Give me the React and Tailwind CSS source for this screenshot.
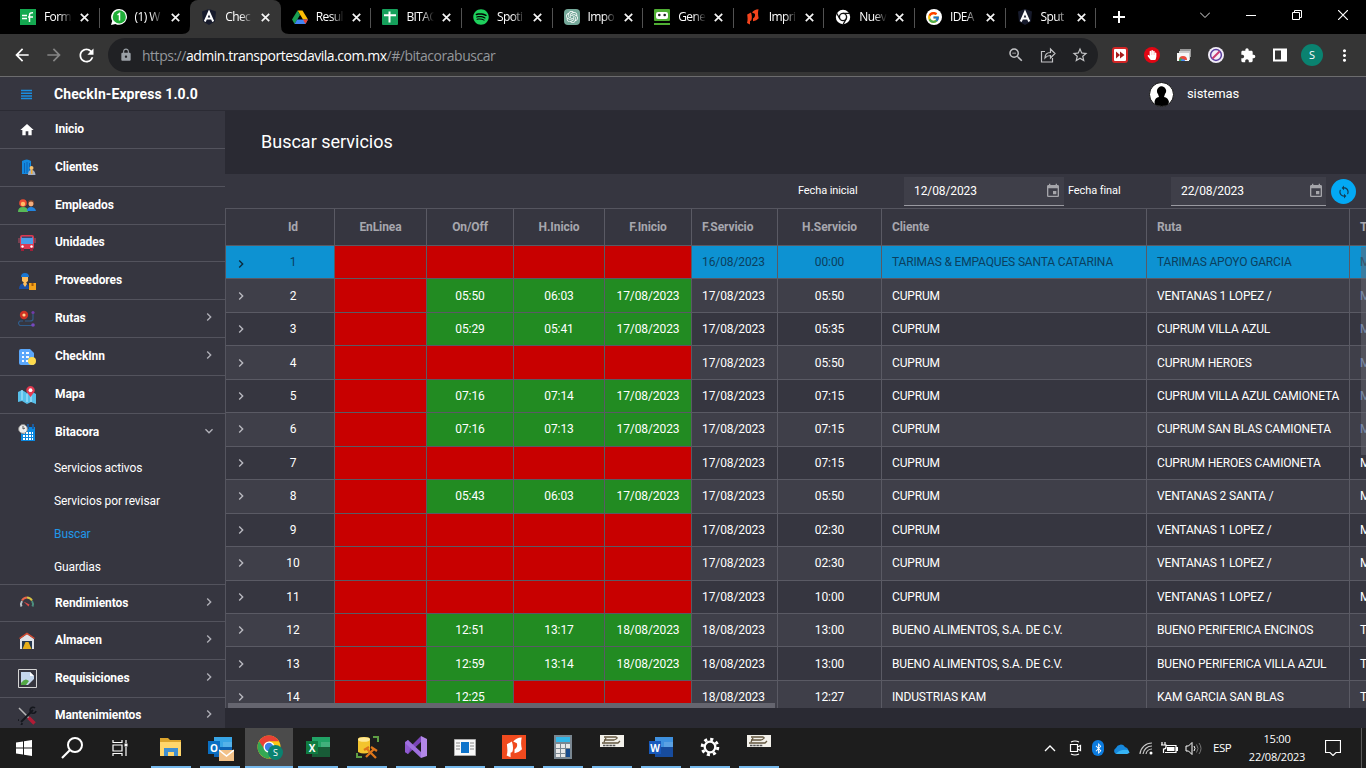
import React from "react";
import { MdHome, MdSync, MdEvent, MdStarBorder, MdLock, MdExtension, MdArrowBack, MdArrowForward, MdRefresh, MdMoreVert, MdChevronRight, MdOutlineZoomOut } from "react-icons/md";
import { FaSpotify, FaHandPaper, FaBluetoothB } from "react-icons/fa";
import { FcGoogle } from "react-icons/fc";
import { SiOpenai } from "react-icons/si";

const S = ({ s = 16, b = 16, children, className = "" }) => (
  <svg width={s} height={s} viewBox={`0 0 ${b} ${b}`} fill="none" className={`shrink-0 ${className}`}>{children}</svg>
);

const Angular = () => (
  <S><path d="M8 0l7 2.500-1 10L8 16l-6-3.500-1-10z" fill="#171b2c" /><path d="M3.800 12.500L8 3l4.200 9.500M5.500 9.500h5" stroke="#fff" strokeWidth="2" /></S>
);
const Nitro = ({ s = 16, color = "#f4431c" }) => (
  <S s={s}><path d="M2.200 5.500L6 3.500c1 3 1.200 5.500.3 8L5 12v3.500l-3-1.500c1-3 .5-5.500.2-8.500z" fill={color} /><path d="M7 3.500Q9 .5 13.500.300c-.7 3-.6 6 .2 9-1.500 1.500-3 2.500-5.700 3V9.500c2-1.500 2.400-3 1.800-4.800z" fill={color} /></S>
);

const tabs = [
  { t: "Form", i: <S><path d="M0 0h16v16H0z" fill="#14a850" /><path d="M2 6.500h5M2 9.500h5M8 8h5M9.500 13V6q0-2.500 3.500-2.300" stroke="#fff" strokeWidth="1.500" /></S> },
  { t: "(1) W", i: <S><path d="M8.200 0a7.900 7.900 0 1 1-3.800 14.900L0 16l1.200-4A8 8 0 0 1 8.200 0z" fill="#fff" /><circle cx="8.300" cy="7.900" r="6.600" fill="#1faf38" /><path d="M6.500 6l2-1.500v7" stroke="#fff" strokeWidth="1.500" /></S> },
  { t: "Chec", i: <Angular />, active: true },
  { t: "Resul", i: <S><path d="M5.500 1.500h5L16 10.500h-5z" fill="#fbbc04" /><path d="M5.500 1.500L8 6 2.600 15 0 10.500z" fill="#1a9e52" /><path d="M5.200 10.500H16L13.400 15H2.600z" fill="#4285f4" /><path d="M11 10.500h5L13.400 15z" fill="#ea4335" /></S> },
  { t: "BITAC", i: <S><rect width="16" height="16" rx="1" fill="#15a05b" /><path d="M2 6.300h12M7.500 2.500v11" stroke="#fff" strokeWidth="2" /></S> },
  { t: "Spoti", i: <FaSpotify className="h-4 w-4 text-[#1ed05c]" /> },
  { t: "Impo", i: <span className="flex h-4 w-4 items-center justify-center rounded-sm bg-[#75a99a]"><SiOpenai className="h-3 w-3 text-white" /></span> },
  { t: "Gene", i: <S><rect y="0" width="16" height="12" rx="1" fill="#4fae33" /><rect x="2" y="3" width="12" height="7" rx="2" fill="#fff" /><circle cx="5.300" cy="6" r="1.300" fill="#222" /><circle cx="10.700" cy="6" r="1.300" fill="#222" /><path d="M0 14h16v2H0z" fill="#4fae33" /></S> },
  { t: "Impri", i: <Nitro /> },
  { t: "Nuev", i: <S><circle cx="8" cy="8" r="7.200" fill="#fff" /><circle cx="8" cy="8" r="3.600" fill="#fff" stroke="#111" strokeWidth="1.400" /><path d="M8 4.300h7M4.800 9.800L1.500 4M11.200 9.900L8 15.500" stroke="#111" strokeWidth="1.300" /></S> },
  { t: "IDEA", i: <span className="flex h-4 w-4 items-center justify-center rounded-full bg-white"><FcGoogle className="h-[13px] w-[13px]" /></span> },
  { t: "Sput", i: <Angular /> },
];

function TabStrip() {
  return (
    <div className="flex h-[34px] bg-black text-white">
      <div className="flex w-[1098px] pl-[9px]">
        {tabs.map((tab, k) => (
          <div key={k} className={`relative flex w-[90.6px] shrink-0 items-center pl-[11px] ${tab.active ? "rounded-t-lg bg-[#353535]" : ""}`}>
            {tab.active && (
              <>
                <S s={8} b={8} className="absolute -left-2 bottom-0"><path d="M8 0v8H0q8 0 8-8z" fill="#353535" /></S>
                <S s={8} b={8} className="absolute -right-2 bottom-0"><path d="M0 0v8h8Q0 8 0 0z" fill="#353535" /></S>
              </>
            )}
            <span className="flex h-4 w-4">{tab.i}</span>
            <span className="ml-2 w-[28px] whitespace-nowrap font-['Open_Sans',sans-serif] text-[12px] tracking-[-0.6px] [mask-image:linear-gradient(to_right,black_55%,transparent)]">{tab.t}</span>
            <S s={9} b={9} className="ml-[8px]"><path d="M.8.800l7.400 7.400M8.200.800L.8 8.200" stroke="#f5f5f5" strokeWidth="1.700" /></S>
            {!tab.active && k !== 1 && <span className="absolute right-0 top-2 h-5 w-px bg-[#525252]" />}
          </div>
        ))}
      </div>
      <S s={12} b={12} className="ml-[15px] mt-[11px]"><path d="M6 0v12M0 6h12" stroke="#fff" strokeWidth="2" /></S>
      <div className="ml-auto flex items-center pb-[5px]">
        <S s={10} b={10} className="mr-[36px]"><path d="M0 2.500l5 5 5-5" stroke="#ddd" /></S>
        <S s={10} b={10} className="mr-[36px]"><path d="M0 5.500h10" stroke="#fff" /></S>
        <S s={10} b={10} className="mr-[36px]"><path d="M.5 2.500h7v7h-7zM2.500 2.500v-2h7v7h-2" stroke="#fff" /></S>
        <S s={10} b={10} className="mr-[18px]"><path d="M0 0l10 10M10 0L0 10" stroke="#fff" strokeWidth="1.200" /></S>
      </div>
    </div>
  );
}

function Toolbar() {
  return (
    <div className="flex h-[43px] items-center border-b border-[#6c6c6e] bg-[#353535] text-white">
      <MdArrowBack className="ml-3 h-5 w-5" />
      <MdArrowForward className="ml-3 h-5 w-5 text-[#858585]" />
      <MdRefresh className="ml-3 h-[21px] w-[21px]" />
      <div className="ml-[11px] flex h-[34px] w-[990px] items-center rounded-full bg-[#202124] pl-[11px] text-[#c3c4c6]">
        <MdLock className="h-[14px] w-[14px] text-[#9aa0a6]" />
        <span className="ml-[9px] whitespace-nowrap font-['Open_Sans',sans-serif] text-[14px] tracking-[-0.48px] text-[#94979b]">https://<span className="text-white">admin.transportesdavila.com.mx</span>/#/bitacorabuscar</span>
        <div className="ml-auto flex items-center gap-[15px] pr-[9px]">
          <MdOutlineZoomOut className="h-[18px] w-[18px]" />
          <S><path d="M5 4.500H1.500V15h11v-4M5 11q0-5.500 5.500-5.500V2L15 6.500 10.500 11V8.500Q7 8.500 5 11z" stroke="currentColor" strokeWidth="1.200" /></S>
          <MdStarBorder className="h-[18px] w-[18px]" />
        </div>
      </div>
      <div className="ml-[14px] flex items-center gap-4">
        <S><rect x="1" y="1" width="14" height="14" rx="2" fill="#fff" stroke="#d22626" strokeWidth="2" /><path d="M4 4.500L8 8l-4 3.500zM8 4.500L12.500 8 8 11.500z" fill="#a51c1c" /></S>
        <span className="flex h-4 w-4 items-center justify-center rounded-full bg-[#e20613]"><FaHandPaper className="h-[10px] w-[10px]" /></span>
        <S><path d="M4 2h11v8H4z" fill="#999" /><path d="M3 4h11v9H3z" fill="#ccc" /><path d="M1 6h12v8H1z" fill="#f7f7f7" /><path d="M3 13a4 4 0 0 1 8 0" fill="#e84b3c" /><path d="M3 13l2-2.500L7 14H3z" fill="#36a852" /><path d="M5 14a2 2 0 0 1 4 0z" fill="#4285f4" /></S>
        <S><circle cx="8" cy="8" r="8" fill="#f2edf8" /><circle cx="8" cy="8" r="5.400" stroke="#5b3fa0" strokeWidth="1.500" /><path d="M4.500 11.500l7-7" stroke="#cc3a72" strokeWidth="2" /></S>
        <MdExtension className="h-[17px] w-4" />
        <S><path d="M2 2.500h12v11H2z" stroke="#fff" strokeWidth="2" /><path d="M9 2h5v12H9z" fill="#fff" /></S>
      </div>
      <span className="ml-[13px] flex h-[22px] w-[22px] items-center justify-center rounded-full bg-[#0a8270] font-['Open_Sans',sans-serif] text-[11px]">S</span>
      <MdMoreVert className="ml-3 h-[19px] w-[19px]" />
    </div>
  );
}

const icons = {
  home: <MdHome className="h-4 w-4 text-white" />,
  clients: <S s={17} b={17}><path d="M3 2q5-3 9 0v13H3z" fill="#1489e0" /><path d="M5.500 4v10M8 3v11M10.500 4v10" stroke="#0b62b5" /><circle cx="12.500" cy="9" r="2" fill="#f6c16c" /><path d="M9 16q0-5 3.500-5t4 5z" fill="#a7b1c4" /><path d="M12 11h1.500v4H12z" fill="#f4ad30" /></S>,
  people: <S s={18} b={18}><circle cx="5" cy="6" r="3.800" fill="#ec4c32" /><circle cx="5" cy="7" r="2.200" fill="#ffbd66" /><circle cx="13" cy="6" r="3.100" fill="#7f452d" /><circle cx="13" cy="7" r="2.400" fill="#f3ae7e" /><path d="M0 15q0-5 5-5t5 5z" fill="#58b957" /><path d="M9 14q0-4 4-4t5 4z" fill="#2184df" /></S>,
  bus: <S s={18} b={18}><rect x="2" y="1" width="14" height="14" rx="2" fill="#dc394f" /><path d="M3 3.500h12v6.500H3z" fill="#4b9ee8" /><path d="M4 2.500h10V4H4z" fill="#3b4673" /><path d="M3 14h3v3H3zM12 14h3v3h-3z" fill="#a11f38" /><path d="M1 4v5M17 4v5" stroke="#bf4b62" /><circle cx="4.500" cy="12.500" r="1.200" fill="#fff" /><circle cx="13.500" cy="12.500" r="1.200" fill="#fff" /></S>,
  provider: <S s={18} b={18}><path d="M3 5q0-4 4-4t4 4z" fill="#1976d2" /><path d="M4 5h6v4q-3 3-6 0z" fill="#ffbe5d" /><path d="M1 17q0-6 6-6 4 0 4 6z" fill="#1b4fa5" /><path d="M6 10h2l1 2-2 3-2-3z" fill="#ffbe5d" /><path d="M11 11h7v7h-7z" fill="#f3a21b" /><path d="M13.500 11h2v3h-2z" fill="#a75b06" /></S>,
  route: <S s={18} b={18}><path d="M5 11H2q-3 2 0 4.500h12M15 4v5q0 2-3 2H7" stroke="#315d8a" strokeWidth="1.200" /><circle cx="6" cy="5" r="4.200" fill="#ce3224" /><circle cx="6" cy="5" r="1.600" fill="#ffd58d" /><circle cx="15" cy="2.500" r="1.600" fill="#713ca7" /><circle cx="15" cy="15" r="1.800" fill="#7748be" /></S>,
  check: <S s={18} b={18}><path d="M3 1h9l4 4v12H3Q1 17 1 15V3q0-2 2-2z" fill="#5aa7fb" /><path d="M4 5h2M4 9h2M4 13h2M8 5h3M8 9h3M8 13h2" stroke="#f4faff" strokeWidth="2" /><circle cx="14" cy="13" r="4" fill="#ffdb4d" /></S>,
  map: <S s={18} b={18}><path d="M0 6l4-2 5 3 4-2 5 3v10l-5-2-4 2-5-3-4 1z" fill="#57bfe9" /><path d="M4 4v10M9 8v8M13 9v7" stroke="#b9e9ff" /><path d="M12.500 11L8.700 6a4.200 4.200 0 1 1 7.600 0z" fill="#e23b51" /><circle cx="12.500" cy="4.200" r="1.900" fill="#fff" /></S>,
  calendar: <S s={18} b={18}><path d="M3 3h14v14H3z" fill="#0b88df" /><path d="M10 0v5M15 0v5" stroke="#1c5b9e" strokeWidth="2" /><path d="M5 9h10M5 12h10M5 15h10" stroke="#fff" strokeWidth="1.800" strokeDasharray="2 1" /><circle cx="5" cy="5" r="4.400" fill="#eee" stroke="#888" /><path d="M5 5V2M5 5l2-1" stroke="#555" /></S>,
  gauge: <S s={18} b={18}><path d="M3.500 12.500A6 6 0 0 1 4 7" stroke="#b8c4c8" strokeWidth="2" /><path d="M4 6.500a6 6 0 0 1 5-3" stroke="#e6654a" strokeWidth="2" /><path d="M9 3.500a6 6 0 0 1 5 3" stroke="#d9c346" strokeWidth="2" /><path d="M14 7a6 6 0 0 1 .5 5.500" stroke="#4c8f7e" strokeWidth="2" /><path d="M10.500 12.500L5.500 7.500l6 3z" fill="#df4b46" /></S>,
  garage: <S s={18} b={18}><path d="M2 7l7-5 7 5v10h-2V9H4v8H2z" fill="#dfe2e8" /><path d="M1.500 6.500L9 1.500l7.500 5" stroke="#d54b31" strokeWidth="1.500" /><path d="M4 9h10v8H4z" fill="#253850" /><path d="M7.500 10h3l3 7h-9z" fill="#e5ad19" /></S>,
  broken: <S s={19} b={19}><path d="M.5.500h18v18H.5z" stroke="#d4d4d4" /><path d="M3 3h9l4 4v9H3z" fill="#c5d7ed" /><path d="M12 3v4h4z" fill="#fff" /><path d="M3 14q4-6 8-2l-3 4H3z" fill="#53a845" /><path d="M9 17l7-7v7z" fill="#36363f" /></S>,
  tools: <S s={19} b={19}><path d="M1 2l11 11" stroke="#b7b7b7" strokeWidth="1.500" /><path d="M10.500 11.500l6 6" stroke="#b21b35" strokeWidth="3.500" /><path d="M3 16L15 4" stroke="#15171d" strokeWidth="2" /><path d="M17 2a3 3 0 1 0 1 3M1 14a3 3 0 1 0 3 3" stroke="#15171d" strokeWidth="1.600" /></S>,
};

const first = [["home", "Inicio"], ["clients", "Clientes"], ["people", "Empleados"], ["bus", "Unidades"], ["provider", "Proveedores"], ["route", "Rutas", 1], ["check", "CheckInn", 1], ["map", "Mapa"]];
const last = [["gauge", "Rendimientos"], ["garage", "Almacen"], ["broken", "Requisiciones"], ["tools", "Mantenimientos"]];

const Item = ({ icon, label, arrow, down, line = true, short }) => (
  <div className={`flex shrink-0 items-center ${short ? "h-[37.6px]" : "h-[37.85px]"} ${line ? "border-b border-[#53535d]" : ""}`}>
    <span className={`ml-[17px] flex w-[20px] justify-center ${short ? "" : "mt-px"}`}>{icons[icon]}</span>
    <span className="ml-[18px] pb-px text-[12px] font-bold tracking-[-0.1px]">{label}</span>
    {arrow && <MdChevronRight className={`ml-auto mr-2 mb-[3px] h-4 w-4 text-[#b0b0b7] ${down ? "rotate-90" : ""}`} />}
  </div>
);

function Sidebar() {
  return (
    <aside className="flex w-[225px] shrink-0 flex-col overflow-hidden bg-[#363640] text-white">
      {first.map(([i, l, a]) => <Item key={i} icon={i} label={l} arrow={a} />)}
      <Item icon="calendar" label="Bitacora" arrow down line={false} />
      <div className="h-[133.300px] shrink-0 border-b border-[#53535d] pl-[54px] text-[12px] tracking-[-0.1px]">
        {["Servicios activos", "Servicios por revisar", "Buscar", "Guardias"].map((l) => (
          <div key={l} className={`flex h-[33px] items-center ${l === "Buscar" ? "text-[#2196e8]" : ""}`}>{l}</div>
        ))}
      </div>
      {last.map(([i, l]) => <Item key={i} icon={i} label={l} arrow short />)}
    </aside>
  );
}

const rows = [
  ["", "", "", "16/08/2023", "00:00", "TARIMAS & EMPAQUES SANTA CATARINA", "TARIMAS APOYO GARCIA", "M"],
  ["05:50", "06:03", "17/08/2023", "17/08/2023", "05:50", "CUPRUM", "VENTANAS 1 LOPEZ /", "M"],
  ["05:29", "05:41", "17/08/2023", "17/08/2023", "05:35", "CUPRUM", "CUPRUM VILLA AZUL", "M"],
  ["", "", "", "17/08/2023", "05:50", "CUPRUM", "CUPRUM HEROES", "M"],
  ["07:16", "07:14", "17/08/2023", "17/08/2023", "07:15", "CUPRUM", "CUPRUM VILLA AZUL CAMIONETA", "M"],
  ["07:16", "07:13", "17/08/2023", "17/08/2023", "07:15", "CUPRUM", "CUPRUM SAN BLAS CAMIONETA", "M"],
  ["", "", "", "17/08/2023", "07:15", "CUPRUM", "CUPRUM HEROES CAMIONETA", "M"],
  ["05:43", "06:03", "17/08/2023", "17/08/2023", "05:50", "CUPRUM", "VENTANAS 2 SANTA /", "M"],
  ["", "", "", "17/08/2023", "02:30", "CUPRUM", "VENTANAS 1 LOPEZ /", "M"],
  ["", "", "", "17/08/2023", "02:30", "CUPRUM", "VENTANAS 1 LOPEZ /", "M"],
  ["", "", "", "17/08/2023", "10:00", "CUPRUM", "VENTANAS 1 LOPEZ /", "M"],
  ["12:51", "13:17", "18/08/2023", "18/08/2023", "13:00", "BUENO ALIMENTOS, S.A. DE C.V.", "BUENO PERIFERICA ENCINOS", "T"],
  ["12:59", "13:14", "18/08/2023", "18/08/2023", "13:00", "BUENO ALIMENTOS, S.A. DE C.V.", "BUENO PERIFERICA VILLA AZUL", "T"],
  ["12:25", "", "", "18/08/2023", "12:27", "INDUSTRIAS KAM", "KAM GARCIA SAN BLAS", "T"],
];
const cols = "grid grid-cols-[26px_83px_92px_87px_91px_87px_86px_104px_265px_203px_16px]";
const center = "flex items-center justify-center border-r border-[#5a5a64]";
const left = "flex items-center whitespace-nowrap border-r border-[#5a5a64] pl-[10px]";

function Table() {
  return (
    <div className="relative h-[500px] overflow-hidden border-l border-t border-[#55555f] text-[12px] tracking-[-0.1px] text-white">
      <div className={`${cols} h-[37px] border-b border-[#5a5a64] font-bold text-[#a7a7ae]`}>
        <span />
        {["Id", "EnLinea", "On/Off", "H.Inicio", "F.Inicio"].map((h) => <div key={h} className={center}>{h}</div>)}
        <div className={left}>F.Servicio</div><div className={center}>H.Servicio</div><div className={left}>Cliente</div><div className={left}>Ruta</div><div className="flex items-center pl-[10px]">T</div>
      </div>
      {rows.map((r, k) => (
        <div key={k} className={`${cols} h-[33.46px] border-b border-[#5a5a64] ${k === 0 ? "bg-[#0d92d2] text-[#0b405e]" : k % 2 ? "bg-[#3f3f49]" : "bg-[#363640]"}`}>
          <span className="flex items-center justify-center pl-1"><MdChevronRight className={`h-4 w-4 ${k ? "text-[#babac0]" : "mt-1 text-[#0b2a3c]"}`} /></span>
          <div className={center}>{k + 1}</div>
          <div className={`${center} bg-[#c80000]`} />
          {r.slice(0, 3).map((v, j) => <div key={j} className={`${center} ${v ? "bg-[#228b22]" : "bg-[#c80000]"}`}>{v}</div>)}
          <div className={left}>{r[3]}</div>
          <div className={center}>{r[4]}</div>
          <div className={`${left} tracking-[-0.16px]`}>{r[5]}</div>
          <div className={`${left} tracking-[-0.16px]`}>{r[6]}</div>
          <div className={`flex items-center pl-[10px] ${k > 0 && k < 6 ? "text-[#8faedb]" : ""}`}>{r[7]}</div>
        </div>
      ))}
      <div className="absolute bottom-0 left-[2px] h-[5px] w-[547px] bg-[#65656f]" />
      <div className="absolute right-0 top-[38px] h-[208px] w-[5px] bg-[#65656f]/50" />
    </div>
  );
}

const DateBox = ({ v, w }) => (
  <div className={`flex h-[29px] items-center justify-between border-b border-[#9a9aa1] bg-[#3f3f49] pl-[10px] ${w}`}>
    {v}<MdEvent className="h-4 w-4 text-[#a5a5aa]" />
  </div>
);

function Main() {
  return (
    <main className="flex w-[1141px] flex-col bg-[#2a2a33] text-white">
      <h1 className="flex h-[63px] items-center pb-[2px] pl-9 text-[18px] font-normal">Buscar servicios</h1>
      <div className="bg-[#363640]">
        <div className="flex h-[34px] pt-[3px] text-[12px] tracking-[-0.1px]">
          <span className="ml-[573px] mt-[6px] w-[106px] text-[11px] leading-[15px]">Fecha inicial</span>
          <DateBox v="12/08/2023" w="w-[160px] pr-[3px]" />
          <span className="mt-[6px] ml-[4px] w-[103px] text-[11px] leading-[15px]">Fecha final</span>
          <DateBox v="22/08/2023" w="w-[155px] pr-[2px]" />
          <span className="ml-[5px] mt-[2px] flex h-[25px] w-[25px] items-center justify-center rounded-full bg-[#03a9f4]"><MdSync className="h-[14px] w-[14px] text-[#123d55]" /></span>
        </div>
        <Table />
      </div>
    </main>
  );
}

const Tile = ({ children, active, line = true, first: lead }) => (
  <div className={`flex h-10 w-12 shrink-0 flex-col items-center ${active ? "bg-[#4b4b4b]" : ""}`}>
    <div className={`flex items-center justify-center ${lead ? "h-10" : "h-[38px]"}`}>{children}</div>
    {line && <div className={`h-[2px] bg-[#76b9ed] ${active ? "w-12" : "w-10"}`} />}
  </div>
);
const Office = ({ letter, dark, light, mail }) => (
  <div className="relative flex h-6 w-6 items-center">
    <S s={24} b={24}><path d="M6 2h18v20H6z" fill={light} /><path d="M6 12h18v10H6z" fill={dark} /><path d="M15 7h9v5h-9z" fill="#fff" fillOpacity=".15" /></S>
    <span className="absolute left-0 top-[6px] flex h-[13px] w-3 items-center justify-center bg-current text-[10px] font-bold leading-none"><span className="text-white">{letter}</span></span>
    {mail && <S s={15} b={15} className="absolute left-[11px] top-[13px]"><path d="M0 2h15v11H0z" fill="#f2c188" /><path d="M0 2l7.500 6L15 2" stroke="#fff" strokeWidth="1.500" /></S>}
  </div>
);
const Logo = () => (
  <S s={24} b={24} className="mb-3"><path d="M0 6h24v12H0z" fill="#f3f1eb" /><path d="M4 8h12q3 1-2 3H4M2 14h16l2-2M6 9l-2 4" stroke="#63563f" strokeWidth="1.300" /><path d="M3 16.500h13" stroke="#555" strokeWidth="1.600" strokeDasharray="2.500 .7" /></S>
);

function Taskbar() {
  return (
    <div className="flex h-10 items-center bg-[#1d1d1d] font-['Open_Sans',sans-serif] text-white">
      <Tile line={false} first><S><path d="M0 2.500L7 1.500v6H0zM8 1.300L16 0v7.500H8zM0 8.500h7v6L0 13.500zM8 8.500h8V16l-8-1.200z" fill="#fff" /></S></Tile>
      <Tile line={false} first><S s={22} b={22}><circle cx="14" cy="8" r="7" stroke="#fff" strokeWidth="2" /><path d="M9 13l-8 8" stroke="#fff" strokeWidth="2.200" /></S></Tile>
      <Tile line={false} first><S><path d="M1 0v2.500h9V0M1 16v-2.500h9V16M1 5h9v6H1zM14 0v3M14 7v9" stroke="#fff" strokeWidth="1.200" /><path d="M12.500 3.500h3v3h-3z" fill="#fff" /></S></Tile>
      <div className="w-[3px]" />
      <div className="flex gap-[1px]">
        <Tile><S s={24} b={24}><path d="M1 3h8l2 2h11v16H1z" fill="#dca52d" /><path d="M1 7h21v14H1z" fill="#ffd66b" /><path d="M5 13h14v8h-4v-4H9v4H5z" fill="#3f8ed0" /></S></Tile>
        <Tile><span className="text-[#0a6fc2]"><Office letter="O" dark="#0d63b3" light="#38a5e5" mail /></span></Tile>
        <Tile active>
          <div className="relative h-6 w-6"><S s={24} b={24}><circle cx="12" cy="12" r="11.500" fill="#fbc816" /><path d="M2 6.300A11.500 11.500 0 0 1 22 6.300H12L7 15z" fill="#e94235" /><path d="M2 6.300A11.500 11.500 0 0 0 12 23.500l5-8.700-9.500-.5z" fill="#34a853" /><circle cx="12" cy="12" r="5.500" fill="#fff" /><circle cx="12" cy="12" r="4.200" fill="#3b7fe8" /></S><span className="absolute -right-[2px] top-[10px] flex h-[15px] w-[15px] items-center justify-center rounded-full bg-[#0a8270] text-[9px]">S</span></div>
        </Tile>
        <Tile><span className="text-[#107c41]"><Office letter="X" dark="#185c37" light="#21a366" /></span></Tile>
        <Tile><S s={24} b={24}><path d="M3 4q0-2 6-2t6 2v13q-6 3-12 0z" fill="#f3c42e" /><ellipse cx="9" cy="4.500" rx="6" ry="2.300" fill="#ffe894" /><path d="M18 2h5v5M2 18v4h5" stroke="#5e9e45" strokeWidth="2" /><path d="M12 14l9 9M11 22l8-8M16 12l6 4M9 15l5-3" stroke="#de761b" strokeWidth="2.300" /></S></Tile>
        <Tile><S s={24} b={24}><path d="M17 1l6 3v17l-6 2z" fill="#b388e8" /><path d="M17 1v6L4 19l-3-2 3-3z" fill="#7a45b8" /><path d="M4 5L1 7v10l3 2 3-7z" fill="#8f5ad0" /><path d="M4 5l13 12v6L1 8z" fill="#9f70df" /></S></Tile>
        <Tile><S s={22} b={22}><path d="M.5 3.500h21v16H.5z" fill="#f7f7f7" stroke="#aaa" /><path d="M7 6h8v11H7z" fill="#0c72ca" /><path d="M2 7h4M2 10h4M2 13h4M16 7h4M16 10h4M16 13h4" stroke="#888" /></S></Tile>
        <Tile><span className="flex h-6 w-6 items-center justify-center bg-[#f04a1e]"><Nitro s={21} color="#fff" /></span></Tile>
        <Tile><S s={24} b={24}><path d="M3 0h18v24H3z" fill="#7a8791" /><path d="M5 2h14v5H5z" fill="#32b6e8" /><path d="M5 9h4v4H5zM10 9h4v4h-4zM15 9h4v4h-4zM5 14h4v4H5zM10 14h4v4h-4zM5 19h4v3H5zM10 19h4v3h-4z" fill="#e8e8e8" /><path d="M15 14h4v8h-4z" fill="#174b8c" /></S></Tile>
        <Tile><Logo /></Tile>
        <Tile><span className="text-[#185abd]"><Office letter="W" dark="#174c9e" light="#3f91df" /></span></Tile>
        <Tile><S s={20} b={20}><circle cx="10" cy="10" r="7.800" stroke="#fff" strokeWidth="3" strokeDasharray="3.060 3.060" /><circle cx="10" cy="10" r="5.300" stroke="#fff" strokeWidth="2.300" /></S></Tile>
        <Tile><Logo /></Tile>
      </div>
      <div className="ml-auto flex h-full items-center">
        <S s={12} b={12} className="mr-[12px]"><path d="M1 9l5-5 5 5" stroke="#fff" strokeWidth="1.300" /></S>
        <S className="mr-[8px]"><path d="M2.500 4.500h7v7h-7zM9.500 7l3-1.500v5L9.500 9M3 2q4-2 8 0M3 14q4 2 8 0" stroke="#fff" strokeWidth="1.200" /></S>
        <span className="mr-[9px] flex h-4 w-3 items-center justify-center rounded-full bg-[#0b7bdf]"><FaBluetoothB className="h-[11px] w-[9px]" /></span>
        <S s={17} b={17} className="mr-[9px]"><path d="M3 14a3.300 3.300 0 0 1 0-6 5 5 0 0 1 9-1 4 4 0 0 1 2 7z" fill="#1688dc" /><path d="M3 14q4-5 12-4 3 3-1 4z" fill="#37b4f4" /></S>
        <S s={14} b={14} className="mr-[8px]"><path d="M1 13A12 12 0 0 1 13 2M4 13a9 9 0 0 1 9-8M7 13a6 6 0 0 1 6-5" stroke="#c8c8c8" strokeWidth="1.200" /><circle cx="12" cy="12" r="1.500" fill="#fff" /></S>
        <S s={17} b={17} className="mr-[7px]"><path d="M1 2v3M4 2v3M0 5h5v2q0 2-2.500 2v4M5.500 5.500H15v7H4" stroke="#fff" strokeWidth="1.200" /><path d="M6 7h7.500v4H6zM15 7h2v4h-2z" fill="#fff" /></S>
        <S s={17} b={17} className="mr-[11px]"><path d="M1 6h2.500L7 2.500v12L3.500 11H1z" stroke="#fff" /><path d="M9 6q2 2.500 0 5" stroke="#fff" /><path d="M11.500 4.500q3 4 0 8M14 3q4 5.500 0 11" stroke="#777" /></S>
        <span className="mr-[14px] w-[20px] whitespace-nowrap text-[11.500px] tracking-[-0.5px]">ESP</span>
        <div className="mr-[18px] flex w-[60px] flex-col items-center whitespace-nowrap text-[11px] leading-[18px] tracking-[-0.2px]"><span>15:00</span><span>22/08/2023</span></div>
        <S className="mr-[20px]"><path d="M.5.500h15v12H11l-3 3-3-3H.5z" stroke="#fff" strokeWidth="1.200" /></S>
        <span className="mr-1 h-full w-px bg-[#5a5a5a]" />
      </div>
    </div>
  );
}

export default function App() {
  return (
    <div className="flex h-[768px] w-[1366px] flex-col overflow-hidden bg-[#2a2a33] font-['Roboto',sans-serif]">
      <TabStrip />
      <Toolbar />
      <header className="flex h-[34px] shrink-0 items-center border-b border-[#2b2b34] bg-[#363640] pt-px text-white">
        <S s={11} b={11} className="ml-[21px]"><path d="M0 1.500h11M0 4.200h11M0 6.900h11M0 9.600h11" stroke="#1a8ee0" strokeWidth="1.500" /></S>
        <span className="ml-[22px] text-[14px] font-bold tracking-[0.080px]">CheckIn-Express 1.0.0</span>
        <S s={25} b={25} className="ml-auto"><circle cx="12.500" cy="12.500" r="12" fill="#fff" stroke="#111" /><path d="M8 9.500a4.600 4.600 0 1 1 8 2.500l-1 3q4 .5 5 5l-1 2.500q-6 3-13 0l-.5-2.500Q6 15.500 10 15l-1-3q-1-1-1-2.500z" fill="#000" /></S>
        <span className="ml-[13px] w-[179px] text-[13px] tracking-[-0.1px]">sistemas</span>
      </header>
      <div className="flex h-[617px] shrink-0 overflow-hidden"><Sidebar /><Main /></div>
      <Taskbar />
    </div>
  );
}
